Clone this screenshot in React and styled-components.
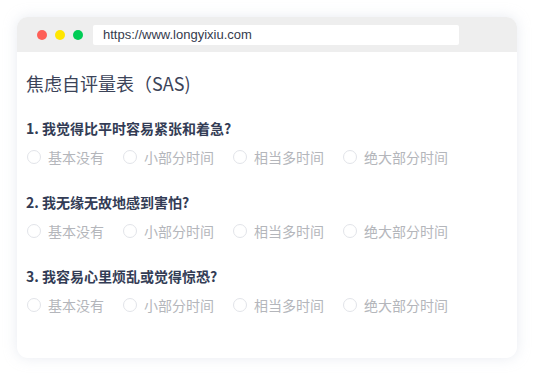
import React from "react";
import styled, { createGlobalStyle } from "styled-components";

const Global = createGlobalStyle`
  html, body { margin: 0; padding: 0; background: #ffffff; }
  body { font-family: "Noto Sans CJK SC", "Noto Sans", sans-serif; }
  * { box-sizing: border-box; }
`;

const Page = styled.div`
  width: 534px;
  height: 374px;
  padding: 17px 17px 0 17px;
`;

const Window = styled.div`
  width: 500px;
  height: 341px;
  border-radius: 11px;
  background: #ffffff;
  box-shadow: 0 0 14px rgba(190, 198, 215, 0.35);
  overflow: hidden;
  display: flex;
  flex-direction: column;
`;

const TitleBar = styled.div`
  height: 35px;
  background: #eeeeee;
  display: flex;
  align-items: center;
  padding-left: 20px;
`;

const Dot = styled.span`
  width: 10px;
  height: 10px;
  border-radius: 50%;
  background: ${(p) => p.color};
  margin-right: 8px;
`;

const UrlBar = styled.div`
  margin-left: 2px;
  width: 366px;
  height: 20px;
  background: #ffffff;
  border-radius: 2px;
  display: flex;
  align-items: center;
  padding-left: 10px;
  font-family: "Liberation Sans", Arial, sans-serif;
  font-size: 13px;
  color: #353b4d;
`;

const Content = styled.div`
  padding: 19px 9px 0 9px;
`;

const Heading = styled.h1`
  margin: 0 0 23px 0;
  font-size: 18px;
  line-height: 24px;
  font-weight: 400;
  color: #3b4358;
`;

const Question = styled.div`
  margin-bottom: 25px;
`;

const QTitle = styled.div`
  font-size: 14px;
  line-height: 20px;
  font-weight: 700;
  color: #333c55;
  margin-bottom: 9px;
`;

const Options = styled.div`
  display: flex;
  align-items: center;
  padding-left: 1px;
`;

const Option = styled.label`
  display: flex;
  align-items: center;
  margin-right: 19px;
  font-size: 14px;
  line-height: 20px;
  color: #b4b6bb;
`;

const Circle = styled.span`
  width: 14px;
  height: 14px;
  border-radius: 50%;
  border: 1px solid #e2e4e9;
  background: #ffffff;
  margin-right: 7px;
`;

const questions = [
  "1. 我觉得比平时容易紧张和着急?",
  "2. 我无缘无故地感到害怕?",
  "3. 我容易心里烦乱或觉得惊恐?",
];
const answers = ["基本没有", "小部分时间", "相当多时间", "绝大部分时间"];

export default function App() {
  return (
    <>
      <Global />
      <Page>
        <Window>
          <TitleBar>
            <Dot color="#fe5f57" />
            <Dot color="#ffe600" />
            <Dot color="#00cc55" />
            <UrlBar>https://www.longyixiu.com</UrlBar>
          </TitleBar>
          <Content>
            <Heading>焦虑自评量表（SAS)</Heading>
            {questions.map((q) => (
              <Question key={q}>
                <QTitle>{q}</QTitle>
                <Options>
                  {answers.map((a) => (
                    <Option key={a}>
                      <Circle />
                      {a}
                    </Option>
                  ))}
                </Options>
              </Question>
            ))}
          </Content>
        </Window>
      </Page>
    </>
  );
}
